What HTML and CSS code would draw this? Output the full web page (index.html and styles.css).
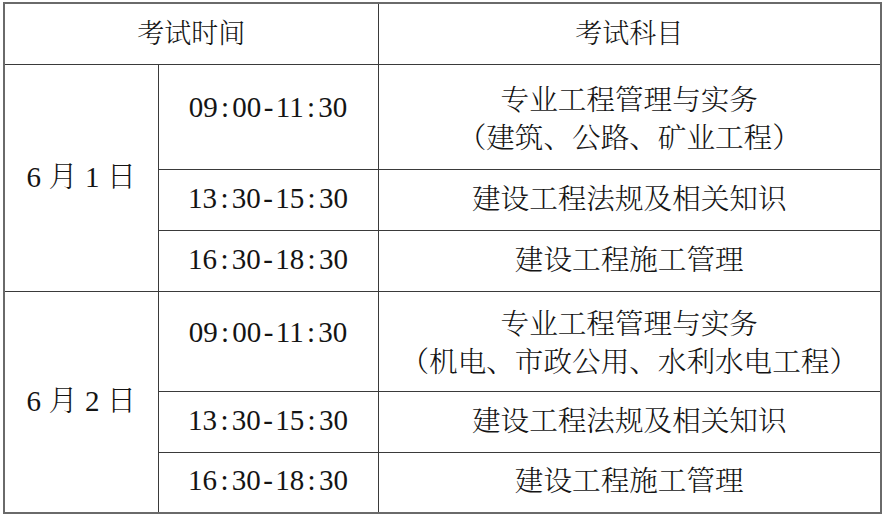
FILE: index.html
```html
<!DOCTYPE html>
<html lang="zh-CN">
<head>
<meta charset="utf-8">
<title>考试时间安排</title>
<link rel="stylesheet" href="styles.css">
</head>
<body>
<table class="schedule">
  <colgroup>
    <col class="col-date">
    <col class="col-time">
    <col class="col-subject">
  </colgroup>
  <tr class="row-head">
    <th class="head" colspan="2">考试时间</th>
    <th class="head">考试科目</th>
  </tr>
  <tr class="row-tall1">
    <td class="date" rowspan="3"><span class="num">6</span> 月 <span class="num">1</span> 日</td>
    <td class="time time-up"><span class="num">09<span class="c">:</span>00<span class="h">-</span>11<span class="c">:</span>30</span></td>
    <td class="subject subject-two"><div class="line">专业工程管理与实务</div><div class="line">（建筑、公路、矿业工程）</div></td>
  </tr>
  <tr class="row-std">
    <td class="time"><span class="num">13<span class="c">:</span>30<span class="h">-</span>15<span class="c">:</span>30</span></td>
    <td class="subject">建设工程法规及相关知识</td>
  </tr>
  <tr class="row-std">
    <td class="time"><span class="num">16<span class="c">:</span>30<span class="h">-</span>18<span class="c">:</span>30</span></td>
    <td class="subject">建设工程施工管理</td>
  </tr>
  <tr class="row-tall2">
    <td class="date" rowspan="3"><span class="num">6</span> 月 <span class="num">2</span> 日</td>
    <td class="time time-up"><span class="num">09<span class="c">:</span>00<span class="h">-</span>11<span class="c">:</span>30</span></td>
    <td class="subject subject-two"><div class="line">专业工程管理与实务</div><div class="line">（机电、市政公用、水利水电工程）</div></td>
  </tr>
  <tr class="row-std">
    <td class="time"><span class="num">13<span class="c">:</span>30<span class="h">-</span>15<span class="c">:</span>30</span></td>
    <td class="subject">建设工程法规及相关知识</td>
  </tr>
  <tr class="row-std">
    <td class="time"><span class="num">16<span class="c">:</span>30<span class="h">-</span>18<span class="c">:</span>30</span></td>
    <td class="subject">建设工程施工管理</td>
  </tr>
</table>
</body>
</html>
```

FILE: styles.css
```css
html, body {
  margin: 0;
  padding: 0;
  background: #ffffff;
}

body {
  padding: 2px 0 0 3px;
  font-family: "Noto Serif CJK SC", "Noto Sans CJK SC", sans-serif;
  color: #141414;
}

.schedule {
  border-collapse: collapse;
  table-layout: fixed;
  width: 877px;
  border: 2px solid #6a6a6a;
}

.col-date { width: 154px; }
.col-time { width: 220px; }
.col-subject { width: 503px; }

.schedule th,
.schedule td {
  border: 1px solid #3a3a3a;
  padding: 0;
  text-align: center;
  vertical-align: middle;
  font-weight: 300;
  white-space: nowrap;
}

.row-head { height: 61px; }
.row-tall1 { height: 105px; }
.row-tall2 { height: 100px; }
.row-std { height: 61px; }

.num {
  font-family: "Liberation Serif", "Times New Roman", serif;
  font-weight: 400;
}

.schedule .head {
  font-size: 27px;
  line-height: 30px;
  padding-bottom: 4px;
}

.schedule .date {
  font-size: 29px;
  line-height: 32px;
  padding-bottom: 4px;
}

.schedule .time {
  font-size: 29px;
  line-height: 32px;
  padding-bottom: 6px;
}

.time .c {
  padding: 0 3.3px;
}

.time .h {
  padding: 0 2.4px;
}

.schedule .time-up {
  padding-bottom: 21px;
}

.schedule .subject {
  font-size: 28.6px;
  line-height: 32px;
  padding-bottom: 6px;
}

.schedule .subject-two {
  padding-bottom: 0;
}

.subject-two .line {
  line-height: 38px;
}
```
